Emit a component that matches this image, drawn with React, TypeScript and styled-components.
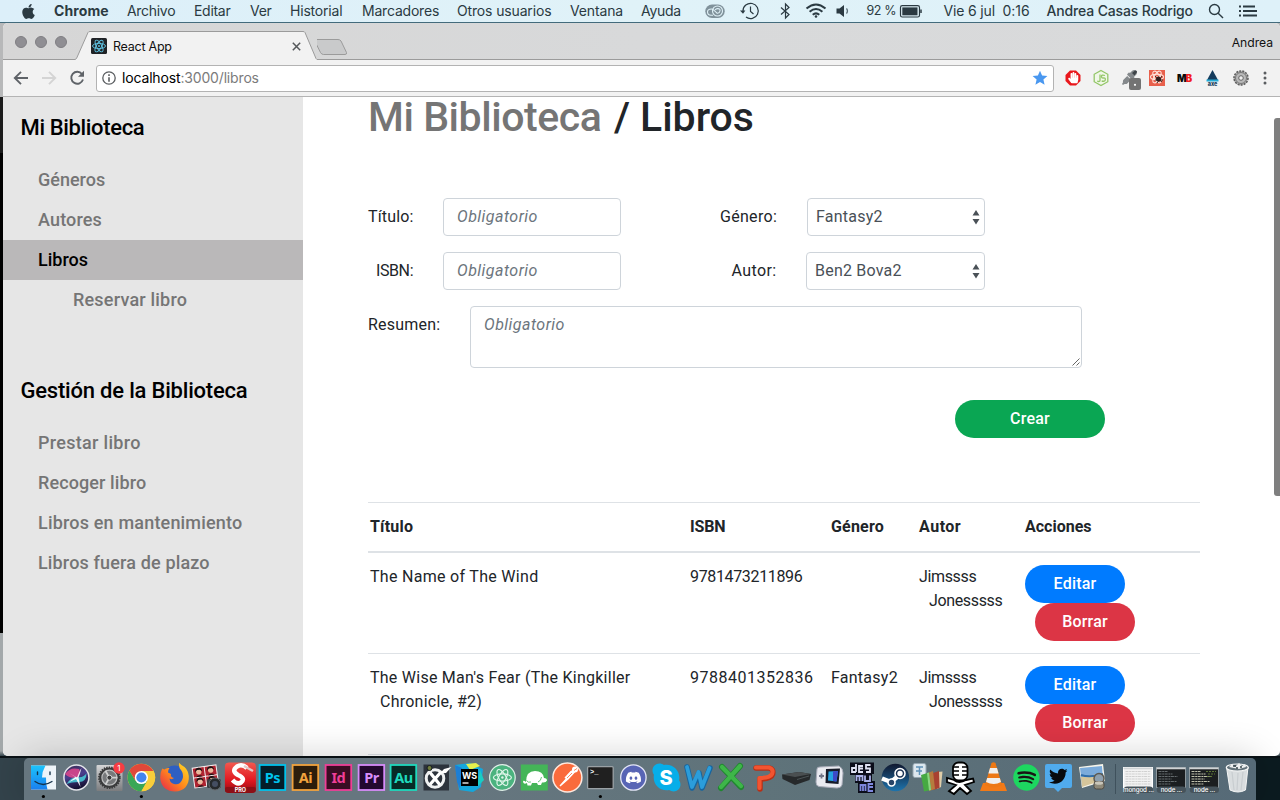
import React from "react";
import styled, { createGlobalStyle } from "styled-components";
import {
  FaApple,
  FaDiscord,
  FaSkype,
  FaSpotify,
  FaTwitter,
  FaHandPaper,
  FaEyeDropper,
} from "react-icons/fa";

const GlobalStyle = createGlobalStyle`
  * { box-sizing: border-box; }
  body { margin: 0; width: 1280px; height: 800px; overflow: hidden; background: #0d1a1f; }
  svg { display: block; flex: none; }
  svg text { white-space: pre; }
`;

const page = `Roboto, "Liberation Sans", sans-serif`;
const system = `Inter, "Liberation Sans", sans-serif`;

/* ---------- desktop ---------- */

const Desktop = styled.div`
  width: 1280px;
  height: 800px;
  display: flex;
  flex-direction: column;
  overflow: hidden;
`;

const MenuBar = styled.header`
  height: 23px;
  flex: none;
  display: flex;
  align-items: center;
  background: linear-gradient(90deg, #dceff9, #e0f2f8 50%, #def1f9);
  border-bottom: 1px solid #436b7c;
  font-family: ${system};
  color: #2b3a42;
`;

const MenuItem = styled.span<{ $w: number; $gap?: number; $weight?: number; $track?: number; $size?: number }>`
  flex: none;
  width: ${(p) => p.$w}px;
  margin-left: ${(p) => p.$gap ?? 18}px;
  font-size: ${(p) => p.$size ?? 14}px;
  font-weight: ${(p) => p.$weight ?? 400};
  letter-spacing: ${(p) => p.$track ?? -0.3}px;
  line-height: 22px;
  white-space: pre;
`;

const Space = styled.span<{ $w: number }>`
  flex: none;
  width: ${(p) => p.$w}px;
`;

const Stage = styled.div`
  flex: 1;
  min-height: 0;
  display: flex;
  flex-direction: column;
  padding-left: 3px;
  background:
    linear-gradient(#0a1216, #0a1216) 0 733px / 100% 2px no-repeat,
    linear-gradient(90deg, #33434b 0 24px, #0c1b20 60px) 0 735px / 100% 42px no-repeat,
    linear-gradient(#b7b8b9 0 74px, #1b1b1b 74px 130px, #000 130px 610px, #a3a8aa 610px 728px, #33434b 733px);
`;

/* ---------- browser window ---------- */

const Window = styled.section`
  height: 733px;
  flex: none;
  display: flex;
  flex-direction: column;
  overflow: hidden;
  border-radius: 5px;
  background: #fff;
`;

const TabStrip = styled.div`
  height: 37px;
  flex: none;
  display: flex;
  background: linear-gradient(90deg, #d6d6d6, #d8d9da 50%, #d9dadb);
  border-bottom: 1px solid #9b9b9b;
  font-family: ${system};
`;

const Lights = styled.div`
  display: flex;
  gap: 8px;
  padding: 13px 0 0 12px;
  width: 72px;
`;

const Light = styled.i`
  width: 12px;
  height: 12px;
  border-radius: 50%;
  background: #8f8e93;
  border: 1px solid #7f7e82;
`;

const Tab = styled.div`
  position: relative;
  width: 242px;
  height: 37px;
  display: flex;
  align-items: center;
  padding: 9px 16px 0 16px;
  font-size: 12.5px;
  color: #111;
  & > * { position: relative; }
`;

const TabShape = styled.svg`
  && { position: absolute; left: 0; top: 0; }
`;

const TabTitle = styled.span`
  flex: 1;
  margin-left: 6px;
  letter-spacing: -0.25px;
  white-space: nowrap;
`;

const Profile = styled.span`
  margin-left: auto;
  padding: 0 7px 0 0;
  font-size: 12.2px;
  line-height: 39px;
  color: #111;
  letter-spacing: -0.05px;
`;

const Toolbar = styled.div`
  height: 37px;
  flex: none;
  display: flex;
  align-items: center;
  background: #f2f2f2;
  border-bottom: 1px solid #b4b4b4;
  font-family: ${system};
`;

const Address = styled.div`
  width: 958px;
  height: 27px;
  flex: none;
  display: flex;
  align-items: center;
  padding: 0 5px;
  background: #fff;
  border: 1px solid #b3b3b3;
  border-radius: 3px;
`;

const Url = styled.span`
  flex: 1;
  margin-left: 6px;
  padding-bottom: 1px;
  font-size: 14px;
  letter-spacing: -0.16px;
  color: #000;
  span { color: #7b7b7b; }
`;

const Viewport = styled.div`
  flex: 1;
  min-height: 0;
  display: flex;
  position: relative;
  font-family: ${page};
`;

const ScrollThumb = styled.div`
  position: absolute;
  right: 0;
  top: 21px;
  width: 6px;
  height: 378px;
  border-radius: 3px 0 0 3px;
  background: #7f7f7f;
`;

/* ---------- side navigation ---------- */

const Sidebar = styled.aside`
  width: 300px;
  flex: none;
  background: #e6e6e6;
`;

const SideTitle = styled.h2<{ $track: number }>`
  height: 63px;
  margin: 0;
  padding-left: 17.5px;
  font-size: 22px;
  font-weight: 500;
  line-height: 62px;
  letter-spacing: ${(p) => p.$track}px;
  color: #000;
`;

const SideList = styled.nav`
  margin-bottom: 40px;
`;

const SideLink = styled.a<{ $active?: boolean; $sub?: boolean; $track?: number }>`
  display: block;
  height: 40px;
  padding-left: ${(p) => (p.$sub ? 70 : 35)}px;
  font-size: 18px;
  font-weight: 500;
  line-height: 40px;
  letter-spacing: ${(p) => p.$track ?? 0}px;
  color: ${(p) => (p.$active ? "#000" : "#757575")};
  background: ${(p) => (p.$active ? "#bab8b9" : "transparent")};
`;

/* ---------- main content ---------- */

const Main = styled.main`
  flex: 1;
  padding-left: 65px;
  color: #212529;
  font-size: 16px;
`;

const Title = styled.h1`
  display: flex;
  height: 48px;
  margin: -4px 0 57px;
  font-size: 41px;
  font-weight: 500;
  line-height: 48px;
  white-space: pre;
`;

const TitlePart = styled.span<{ $w: number; $muted?: boolean; $track?: number }>`
  width: ${(p) => p.$w}px;
  letter-spacing: ${(p) => p.$track ?? 0}px;
  color: ${(p) => (p.$muted ? "#757575" : "#212529")};
`;

const FormRow = styled.div`
  display: flex;
  margin-bottom: 16px;
`;

const Label = styled.label<{ $w: number; $indent?: number; $track?: number }>`
  width: ${(p) => p.$w}px;
  padding-left: ${(p) => p.$indent ?? 0}px;
  line-height: 37px;
  letter-spacing: ${(p) => p.$track ?? 0}px;
  white-space: nowrap;
`;

const Field = styled.div<{ $w: number; $h?: number; $select?: boolean }>`
  position: relative;
  width: ${(p) => p.$w}px;
  height: ${(p) => p.$h ?? 38}px;
  display: flex;
  justify-content: space-between;
  padding: ${(p) => (p.$select ? "0 4px 0 8px" : "0 12px 0 13px")};
  border: 1px solid #ced4da;
  border-radius: 4px;
  line-height: 35px;
  color: #495057;
`;

const Placeholder = styled.em`
  color: #6c757d;
  letter-spacing: 0.47px;
`;

const Value = styled.span`
  letter-spacing: 0.22px;
`;

const Grip = styled.svg`
  position: absolute;
  right: 1px;
  bottom: 1px;
`;

const SubmitRow = styled.div`
  padding: 16px 0 0 587px;
`;

const Pill = styled.button<{ $color: string; $w?: number; $shift?: number }>`
  display: block;
  width: ${(p) => p.$w ?? 100}px;
  height: 38px;
  margin: 0 0 0 ${(p) => p.$shift ?? 0}px;
  padding: 0 0 1px;
  border: 0;
  border-radius: 19px;
  background: ${(p) => p.$color};
  color: #fff;
  font-family: ${page};
  font-size: 16px;
  font-weight: 500;
  letter-spacing: 0.2px;
`;

const Table = styled.div`
  width: 832px;
  margin-top: 64px;
  border-top: 1px solid #dee2e6;
`;

const Row = styled.div<{ $head?: boolean }>`
  display: grid;
  grid-template-columns: 320px 141px 88px 106px 1fr;
  height: ${(p) => (p.$head ? 50 : 101)}px;
  padding: ${(p) => (p.$head ? "12px 0 0 2px" : "12px 0 0 2px")};
  border-bottom: ${(p) => (p.$head ? 2 : 1)}px solid #dee2e6;
  font-weight: ${(p) => (p.$head ? 700 : 400)};
  line-height: 24px;
`;

const Cell = styled.span<{ $track?: number }>`
  padding-left: 10px;
  text-indent: -10px;
  letter-spacing: ${(p) => p.$track ?? 0}px;
  white-space: pre-line;
`;

/* ---------- dock ---------- */

const Dock = styled.footer`
  position: relative;
  width: 1232px;
  height: 42px;
  margin: 2px 0 0 21px;
  flex: none;
  display: flex;
  padding: 2px 0 0 3.2px;
  border-radius: 5px 5px 0 0;
  background: linear-gradient(90deg, #66767f, #66767f 35%, #5f737a 60%, #566a77);
  box-shadow: 0 0 38px rgba(0, 0, 0, 0.2);
`;

const DockIcon = styled.svg`
  width: 32.75px;
  height: 40px;
  overflow: visible;
`;

const DockDivider = styled.i`
  width: 1px;
  height: 30px;
  margin: 4px 6px 0 7.5px;
  background: #3f515c;
`;

const DockItem = ({ running, children }: { running?: boolean; children: React.ReactNode }) => (
  <DockIcon viewBox="0 0 32.75 40">
    {children}
    {running && <circle cx="16.4" cy="36.5" r="1.6" fill="#000" />}
  </DockIcon>
);

const Adobe = ({ label, fg, bg }: { label: string; fg: string; bg: string }) => (
  <DockItem>
    <rect x="3.6" y="5" width="25.6" height="25" fill={bg} stroke={fg} strokeWidth="1.8" />
    <text x="16.4" y="23" textAnchor="middle" fontFamily="Noto Sans, sans-serif" fontWeight="700" fontSize="14.5" letterSpacing="-.5" fill={fg}>
      {label}
    </text>
  </DockItem>
);

const Minimized = ({ label, light, colored }: { label: string; light?: boolean; colored?: boolean }) => (
  <DockItem>
    <rect x="1.5" y="7.5" width="29" height="20" fill={light ? "#f2f2f2" : "#1b1e20"} stroke={light ? "#fff" : "#8d979c"} />
    <rect x="1.5" y="7.5" width="29" height="1.8" fill="#cfd3d5" />
    {[11.5, 14, 16.5, 19, 21.5, 24].map((y, i) => (
      <path
        key={y}
        d={`M3.5 ${y}h${light ? 25 : 9 + ((i * 5) % 11)}`}
        stroke={light ? "#cccccc" : colored ? "#d5d5bd" : "#6d7476"}
        strokeWidth=".9"
        strokeDasharray="3 .7 2 .5"
      />
    ))}
    {colored && <path d="M18 11.5h10M20 14h7M19 16.5h6" stroke="#6e8a3d" strokeWidth=".8" strokeDasharray="2 1" />}
    <rect x="1.8" y="26.4" width="29.200" height="6.6" rx="3.3" fill="#46535b" />
    <text x="16.4" y="31.500" textAnchor="middle" fontFamily={system} fontWeight="500" fontSize="6.200" letterSpacing="-.1" fill="#fff">
      {label}
    </text>
  </DockItem>
);

const AtomRings = ({ cx, cy, rx, ry, color, width }: { cx: number; cy: number; rx: number; ry: number; color: string; width: number }) => (
  <g fill="none" stroke={color} strokeWidth={width}>
    {[0, 60, 120].map((a) => (
      <ellipse key={a} cx={cx} cy={cy} rx={rx} ry={ry} transform={`rotate(${a} ${cx} ${cy})`} />
    ))}
    <circle cx={cx} cy={cy} r={width} fill={color} stroke="none" />
  </g>
);

const DockBar = () => (
  <Dock>
    <svg width="0" height="0">
      <defs>
        <linearGradient id="finderBlue" x2="0" y2="1"><stop stopColor="#1cc3fb" /><stop offset="1" stopColor="#1a80f0" /></linearGradient>
        <linearGradient id="sred" x2="0" y2="1"><stop stopColor="#f2594f" /><stop offset=".6" stopColor="#df1720" /><stop offset="1" stopColor="#8e0b12" /></linearGradient>
        <linearGradient id="siri" x2=".3" y2="1"><stop stopColor="#3b2a4f" /><stop offset=".5" stopColor="#4a3f8f" /><stop offset="1" stopColor="#141033" /></linearGradient>
        <linearGradient id="fox" x1="1" x2="0" y2="1"><stop stopColor="#ffe226" /><stop offset=".5" stopColor="#ff8a1c" /><stop offset="1" stopColor="#e5204f" /></linearGradient>
        <linearGradient id="steam" x2="0" y2="1"><stop stopColor="#10182f" /><stop offset="1" stopColor="#1e74ad" /></linearGradient>
        <linearGradient id="metal" x2="0" y2="1"><stop stopColor="#d5d6d7" /><stop offset="1" stopColor="#7b7c7e" /></linearGradient>
      </defs>
    </svg>
    <DockItem running>
      <rect x="4" y="5.5" width="25" height="24" fill="#eef4f9" />
      <path d="M4 5.5h14.5q-3.5 6-3.500 12h4q-.3 6 1.500 12H4z" fill="url(#finderBlue)" />
      <path d="M8 21.500q8 6 17 0" fill="none" stroke="#15324b" strokeWidth="1.300" strokeLinecap="round" />
      <path d="M10.500 12v2.500M23 12v2.500" stroke="#15324b" strokeWidth="1.400" strokeLinecap="round" />
    </DockItem>
    <DockItem>
      <circle cx="16.400" cy="17.500" r="12.500" fill="url(#siri)" stroke="#e3e4ea" strokeWidth="1.500" />
      <path d="M5 14Q10 6.500 19 9Q22 13 17 18Q9 18.500 5 14" fill="#e0478c" opacity=".85" />
      <path d="M6.500 24Q11 17 17 17Q24 18 26.500 13Q26.500 22 19 22Q11 22 6.500 24" fill="#49d0dc" opacity=".85" />
      <path d="M17 17.500Q20 10 21.500 8Q20 14 18.500 17.500L20.500 27L16 19L9 22L15.500 17L9 13Z" fill="#fff" opacity=".9" />
    </DockItem>
    <DockItem>
      <rect x="3.500" y="5" width="26" height="26" rx="1" fill="url(#metal)" />
      <circle cx="16.400" cy="17.700" r="10.300" fill="#3a3b3c" stroke="#3a3b3c" strokeWidth="2" strokeDasharray="1.500 1" />
      <circle cx="16.400" cy="17.700" r="7.500" fill="#77797b" stroke="#bcbdbe" strokeWidth="1.200" />
      <path d="M16.400 17.700h8M16.400 17.700l-4-7M16.400 17.700l-4 7" stroke="#d0d1d1" strokeWidth="1.800" />
      <circle cx="16.400" cy="17.700" r="2.500" fill="#3a3b3c" stroke="#d0d1d1" />
      <circle cx="26" cy="8" r="5.700" fill="#f63d43" />
      <text x="26" y="11" textAnchor="middle" fontFamily={system} fontSize="8" fill="#fff">1</text>
    </DockItem>
    <DockItem running>
      <circle cx="16.400" cy="17.500" r="13.800" fill="#f9ce3b" />
      <path d="M4.450 10.600A13.800 13.800 0 0 0 16.400 31.300L22.300 20.800L16.400 17.500L10.500 20.800z" fill="#3aa757" />
      <path d="M28.350 10.600H16.400v7l6 3.300L16.400 31.300A13.800 13.800 0 0 0 28.350 10.600" fill="#f9ce3b" />
      <path d="M4.450 10.600A13.800 13.800 0 0 1 28.350 10.900H16.400L10.500 20.800Z" fill="#e0483a" />
      <circle cx="16.400" cy="17.500" r="6.600" fill="#fff" />
      <circle cx="16.400" cy="17.500" r="5.100" fill="#4285f0" />
    </DockItem>
    <DockItem>
      <circle cx="16.600" cy="17" r="11.500" fill="#2e5fc2" />
      <path d="M4.200 8.500Q2 13 2.200 18C3 27 9 31.500 17 31.500C26 31.500 31.500 25 30.800 16Q30 10 26.500 7Q23 5 21 2.700Q20.500 7.500 23 10Q26 14 24.500 19Q22 25.500 16 24Q12 23 11.500 18.500Q14 20 16 18Q12 17 13 14L10 12.500Q10 9.500 11.500 8Q8 7.500 6.500 9.500Z" fill="url(#fox)" />
    </DockItem>
    <DockItem>
      <g transform="rotate(-8 14 17)">
        <rect x="2" y="6" width="25" height="21" fill="#f2eeee" />
        {[[3, 7], [15, 7], [3, 17], [15, 17]].map(([x, y]) => (
          <g key={`${x}-${y}`}>
            <rect x={x} y={y} width="11" height="9" fill="#ae2330" />
            <circle cx={x + 5.5} cy={y + 4} r="2.700" fill="#e9b99d" />
            <path d={`M${x + 2} ${y + 4}q0-4 3.500-4t3.500 4l-2-2h-3zM${x + 2} ${y + 9}q3.500-3 7 0`} fill="#1b1314" />
          </g>
        ))}
      </g>
      <rect x="16" y="19" width="14" height="9" rx="1.500" fill="#3b3f43" />
      <circle cx="24" cy="24" r="6" fill="#26292c" stroke="#666a6e" />
      <circle cx="24" cy="24" r="3" fill="#454e62" />
    </DockItem>
    <DockItem>
      <rect x="0.900" y="2.500" width="31" height="30.500" rx="4" fill="url(#sred)" />
      <path d="M23 8Q18 3.500 13 6.500Q7 11 14 15Q22 18.500 17 22.500Q13 25 8.500 20" fill="none" stroke="#fff" strokeWidth="4.500" />
      <path d="M20 6l9 5" stroke="#e5c7c7" strokeWidth="2.500" />
      <rect x="1" y="27" width="30.800" height="5.500" rx="2" fill="#8c0f16" />
      <text x="16.400" y="31.800" textAnchor="middle" fontFamily={system} fontWeight="700" fontSize="5.500" fill="#fff">PRO</text>
    </DockItem>
    <Adobe label="Ps" fg="#00c3ec" bg="#041d28" />
    <Adobe label="Ai" fg="#f2a33d" bg="#2d1d0b" />
    <Adobe label="Id" fg="#ef3f97" bg="#3a0d23" />
    <Adobe label="Pr" fg="#d78cfa" bg="#23082f" />
    <Adobe label="Au" fg="#1fd9bd" bg="#072a26" />
    <DockItem>
      <rect x="3.500" y="4.500" width="25.500" height="26" fill="#2c333c" />
      <circle cx="15" cy="18.500" r="8.800" fill="none" stroke="#eef0f1" strokeWidth="3" />
      <path d="M10 24L24 9L31.500 7L26 13L20 13.500Z" fill="#fff" />
      <path d="M10 24.500L21 12M10 12.500L20 25" stroke="#fff" strokeWidth="3.200" />
      <circle cx="9.500" cy="8" r="2.500" fill="#6e7b3b" stroke="#151c21" />
    </DockItem>
    <DockItem>
      <path d="M2 5L17 3L30 9L28 27L20 32L6 30Z" fill="#14a7dc" />
      <path d="M2 5L9 8L7 29L4 22Z" fill="#1c7ed5" />
      <path d="M13 4L23 3L27 6L17 10Z" fill="#e5f04d" />
      <path d="M27 10L31 20L24 27Z" fill="#19cdc4" />
      <rect x="8" y="9" width="17" height="17" fill="#000" />
      <text x="9" y="18.800" fontFamily={system} fontWeight="700" fontSize="9" fill="#fff">WS</text>
      <path d="M9.500 23h6" stroke="#fff" strokeWidth="1.300" />
    </DockItem>
    <DockItem>
      <circle cx="16.400" cy="17.500" r="12.800" fill="#4bb37f" stroke="#e0f0e8" strokeWidth="1.200" />
      <AtomRings cx={16.4} cy={17.5} rx={9} ry={3.6} color="#dff6ea" width={1.2} />
    </DockItem>
    <DockItem>
      <rect x="2.800" y="4.500" width="27" height="26" fill="#44b558" />
      <path d="M8 22Q8 11 17 11Q25 11 26 18Q29 18 29 20.500Q28 23 24 22.500L23 25H20L19 23H14L13 25.500H9.500L9 23Q5 25 5 21Q6 20 8 22" fill="#fff" />
      <path d="M8.500 20.500Q10 23 13 22M20 22Q23 21 23.500 17" stroke="#44b558" strokeWidth=".8" fill="none" />
    </DockItem>
    <DockItem>
      <circle cx="16.400" cy="17.500" r="14.500" fill="#fa6b3c" stroke="#ffe9df" strokeWidth="1.500" />
      <path d="M9 26L17 17L14 18L20 11.500Q22 10 23.500 12L17 19Z" fill="#fff" stroke="#fff" strokeWidth="1.300" />
      <circle cx="24" cy="9.500" r="3" fill="#fff" />
      <path d="M23 10.500l3-2M16 18l5-5" stroke="#fa6b3c" strokeWidth=".8" />
    </DockItem>
    <DockItem running>
      <rect x="3.600" y="6.700" width="25.600" height="22" rx="1" fill="#202020" stroke="#9aa1a5" strokeWidth="1.300" />
      <text x="6" y="14" fontFamily="Liberation Mono, monospace" fontWeight="700" fontSize="7" fill="#fff">&gt;_</text>
    </DockItem>
    <DockItem>
      <circle cx="16.400" cy="17.500" r="12.700" fill="#5865b5" stroke="#e4e6f5" strokeWidth="1.300" />
      <FaDiscord x="8.200" y="9.300" size={16.5} color="#fff" />
    </DockItem>
    <DockItem>
      <FaSkype x="1.500" y="1.500" size={32} color="#07aee9" />
      <circle cx="16.900" cy="17.500" r="9.600" fill="#07aee9" />
      <text x="17" y="24.600" textAnchor="middle" fontFamily={system} fontWeight="800" fontSize="20" fill="#fff">S</text>
    </DockItem>
    <DockItem>
      <path d="M5 7L10 28L17 13L20 28L28 8" fill="none" stroke="#17659f" strokeWidth="5.500" strokeLinejoin="round" strokeLinecap="round" />
      <path d="M5 7L10 27L16.500 12L20 27L27.500 8" fill="none" stroke="#2b9ddb" strokeWidth="3.800" strokeLinejoin="round" strokeLinecap="round" />
    </DockItem>
    <DockItem>
      <path d="M7 7L26 27M25 6L6 28" stroke="#20872f" strokeWidth="6" strokeLinecap="round" />
      <path d="M7 7L26 26M25 6L6 27" stroke="#3eb649" strokeWidth="4.200" strokeLinecap="round" />
    </DockItem>
    <DockItem>
      <path d="M8 8H21Q26 9 24.500 14.500Q23 19 12 19V29" fill="none" stroke="#b92f15" strokeWidth="5.500" strokeLinejoin="round" strokeLinecap="round" />
      <path d="M8 7.500H21Q26 9 24 14Q22 18 11.500 18V28" fill="none" stroke="#f25430" strokeWidth="4.200" strokeLinejoin="round" strokeLinecap="round" />
    </DockItem>
    <DockItem>
      <path d="M2 14.500L19 12L31 14L29.500 20L15 25L2.500 19Z" fill="#26292b" />
      <path d="M2 14.500L19 12L31 14L15 17Z" fill="#4a4f51" />
      <path d="M17 19.500L29 16" stroke="#565e61" strokeWidth=".8" />
    </DockItem>
    <DockItem>
      <path d="M4 9Q4 7 7 7L26 6Q30 8 30 13L29 25Q28 28 24 28L6 26.500Q3 26 3 22Z" fill="#e9eaf0" stroke="#a9acb9" />
      <path d="M13 9L27 8.500L25.500 24L12.500 23Z" fill="#171a28" />
      <path d="M15.500 11.500L25 11L23.500 21.500L15 20.500Z" fill="#25a2e2" />
      <path d="M20 11.300L25 11L23.500 21.500L20 21Z" fill="#3d49c9" />
      <path d="M6 16h5M8.500 13.500v5" stroke="#717588" strokeWidth="1.800" />
    </DockItem>
    <DockItem>
      <path d="M4 2.500H28V14H26V21H29V33H12V23H9V15H4Z" fill="#0b0d1a" />
      <g fill="none" strokeWidth="1.800">
        <path d="M10 4v8M10 8H6v4h4M17 8.500h-4V6h4M13 8.500V12h4M24.500 5H20v3.500h4V12h-4" stroke="#dfe2f3" />
        <path d="M10.500 21v-5h6v5M13.500 16v5M19 15.500V21h5v-5.500" stroke="#a8afe7" />
        <path d="M14.500 31v-6h5v6M17 25v6M27 27h-4.500v-3H27M22.500 27v4H27" stroke="#7f88df" />
      </g>
    </DockItem>
    <DockItem>
      <circle cx="16.400" cy="17.500" r="13.700" fill="url(#steam)" />
      <path d="M3 18.500L12 22L18 17" stroke="#fff" strokeWidth="4.500" fill="none" />
      <circle cx="21" cy="13.500" r="5" fill="#1b3354" stroke="#fff" strokeWidth="1.600" />
      <circle cx="21" cy="13.500" r="2.700" fill="#fff" />
      <circle cx="12.500" cy="22.500" r="3.500" fill="#284568" stroke="#fff" strokeWidth="1.600" />
    </DockItem>
    <DockItem>
      <rect x="2" y="3.500" width="13" height="14" rx="2" fill="#dce7ee" stroke="#95a6b0" />
      <path d="M5 7h7M8.500 7v8M5 11h6" stroke="#5e91b7" strokeWidth="1.500" />
      <path d="M27 12L31.500 11.500L30 27L26 29Z" fill="#dfcda9" />
      <path d="M22 13L28 11L28.500 28L22 30Z" fill="#a94131" />
      <path d="M17 13L22 11L24 29L18 31Z" fill="#b67b3e" />
      <path d="M10 15L18 12.500L20 30L13 31.500Z" fill="#46a942" />
      <path d="M16 13L18 12.500L20 30L18 30.500Z" fill="#8bd681" />
    </DockItem>
    <DockItem>
      <g fill="#fff" stroke="#000" strokeWidth="1.800">
        <path d="M10 20Q15 24 22 20L29 18.500L30 22L21 25L27 31L23 34L16 28L10 34L5 31L12 25L3 22V18Z" />
        <rect x="9" y="2.500" width="14.500" height="18" rx="5.500" />
      </g>
      <path d="M9 7h6M18 7h5M9 11h6M18 11h5M9 15h6M18 15h5" stroke="#000" strokeWidth="1.500" />
    </DockItem>
    <DockItem>
      <path d="M6 23H27L30 31H3Z" fill="#f27a17" />
      <path d="M14.500 3Q16.500 1.500 18.500 3L25 25Q17 30 8 25Z" fill="#ed7814" />
      <path d="M13 8h7l1.600 5.500h-10.200zM10.200 18h12.600l1.200 4Q17 26 9 22z" fill="#f0efed" />
    </DockItem>
    <DockItem>
      <circle cx="16.400" cy="17.500" r="11" fill="#191414" />
      <FaSpotify x="2.800" y="3.900" size={27.2} color="#1dd760" />
    </DockItem>
    <DockItem>
      <path d="M5 4H28Q30 4 30 6V26Q30 28 28 28H20L16 32L12 28H5Q3 28 3 26V6Q3 4 5 4" fill="#50abed" />
      <FaTwitter x="7" y="7" size={18.5} color="#080b0e" />
    </DockItem>
    <DockItem>
      <path d="M4 7L28 4L30 21L7 28Z" fill="#f7f5ec" />
      <path d="M5 8L27 6L28 19L7 26Z" fill="#7babdb" />
      <path d="M6 17L28 13L28 20L7 27Z" fill="#d5c59b" />
      <path d="M6 15q9 3 22-1" stroke="#2f6dab" strokeWidth="2" fill="none" />
      <circle cx="24" cy="18.500" r="5" fill="#8d9fae" stroke="#5c5850" strokeWidth="1.400" />
      <rect x="19" y="21.500" width="10" height="7.500" rx="2.500" fill="#8f8a7a" stroke="#514d45" />
      <ellipse cx="24" cy="23" rx="4.200" ry="1.800" fill="#c9c6ba" />
    </DockItem>
    <DockDivider />
    <Minimized label="mongod ..." light />
    <Minimized label="node ..." />
    <Minimized label="node ..." colored />
    <DockItem>
      <path d="M5.500 7H27L24.500 30Q17 34 9 30Z" fill="#d9dddf" stroke="#f5f6f6" />
      <ellipse cx="16.300" cy="7.500" rx="11" ry="3.500" fill="#63727a" stroke="#f6f7f7" strokeWidth="1.200" />
      <path d="M8 7l3-3 3 3 4-4 3 3 3-2 1 3-7 2z" fill="#eef0f1" />
      <path d="M12 6h3M19 7h2M15 8h2" stroke="#37464c" strokeWidth="1.500" />
      <path d="M11 12l2 18M17 13l-1 17M22 12l-2 18" stroke="#c8cdd0" strokeWidth="1.200" />
    </DockItem>
  </Dock>
);

/* ---------- menu bar ---------- */

const MacMenuBar = () => (
  <MenuBar>
    <Space $w={19.5} />
    <FaApple size={17} />
    <MenuItem $w={55} $gap={17.5} $weight={700} $track={0.1}>Chrome</MenuItem>
    <MenuItem $w={49}>Archivo</MenuItem>
    <MenuItem $w={38}>Editar</MenuItem>
    <MenuItem $w={22}>Ver</MenuItem>
    <MenuItem $w={54} $track={-0.2}>Historial</MenuItem>
    <MenuItem $w={77} $track={-0.2}>Marcadores</MenuItem>
    <MenuItem $w={95} $track={-0.15}>Otros usuarios</MenuItem>
    <MenuItem $w={53} $track={-0.15}>Ventana</MenuItem>
    <MenuItem $w={40}>Ayuda</MenuItem>
    <Space $w={24} />
    <svg width="20" height="15" viewBox="0 0 20 15">
      <rect x=".3" y=".5" width="19.400" height="13.500" rx="6.700" fill="#80929b" />
      <g fill="none" stroke="#e0f2f8" strokeWidth="1.100">
        <circle cx="12.500" cy="7" r="5" />
        <path d="M8 11.200H6Q2.500 11 2.500 8T6.500 5Q8 5 12 9.200Q14.500 9.500 15 7T12.500 4.600Q11 4.700 10 6" />
      </g>
    </svg>
    <Space $w={15} />
    <svg width="21" height="18" viewBox="0 0 21 18" fill="none" stroke="#2b3a42" strokeWidth="1.200">
      <path d="M3 9A7.600 7.600 0 1 1 6 15" />
      <path d="M0 8.500h5.400L3 11.800z" fill="#2b3a42" stroke="none" />
      <path d="M10.500 4.500v5l3 2.500" />
    </svg>
    <Space $w={17} />
    <svg width="15" height="18" viewBox="0 0 15 18" fill="none" stroke="#2b3a42" strokeWidth="1.200">
      <path d="M3 5.500L11 12.500L7.500 16V2L11 5.500L3 12.500" />
    </svg>
    <Space $w={11.5} />
    <svg width="22" height="16" viewBox="0 0 22 16" fill="none" stroke="#2b3a42" strokeWidth="2">
      <path d="M1.500 5.500Q11-2.500 20.500 5.500M4.600 8.700Q11 3.200 17.400 8.700M7.700 11.700Q11 9 14.300 11.700" />
      <circle cx="11" cy="13.500" r="1.300" fill="#2b3a42" stroke="none" />
    </svg>
    <Space $w={9} />
    <svg width="14" height="14" viewBox="0 0 14 14">
      <path d="M.5 4.500h3L8 1v12L3.500 9.500h-3z" fill="#2b3a42" />
      <path d="M10.500 4.300q2 2.700 0 5.400" fill="none" stroke="#5f7079" strokeWidth="1.200" />
    </svg>
    <MenuItem $w={31} $gap={17} $size={12.5} $track={-0.4}>92 %</MenuItem>
    <svg width="24" height="13" viewBox="0 0 24 13">
      <rect x="2.500" y=".7" width="19" height="11.300" rx="1.800" fill="none" stroke="#2b3a42" strokeWidth="1.200" />
      <rect x="4.300" y="2.400" width="15.200" height="7.900" fill="#2b3a42" />
      <path d="M23 4.500v3.600" stroke="#2b3a42" strokeWidth="1.500" />
    </svg>
    <MenuItem $w={53} $gap={22} $track={-0.15}>Vie 6 jul</MenuItem>
    <MenuItem $w={28} $gap={6} $track={-0.05}>0:16</MenuItem>
    <MenuItem $w={148} $gap={16} $weight={500} $track={-0.15}>Andrea Casas Rodrigo</MenuItem>
    <Space $w={13} />
    <svg width="16" height="16" viewBox="0 0 16 16" fill="none" stroke="#2b3a42" strokeWidth="1.400">
      <circle cx="6.500" cy="6.500" r="5" />
      <path d="M10.200 10.200L15 15" />
    </svg>
    <Space $w={14} />
    <svg width="20" height="14" viewBox="0 0 20 14" stroke="#2b3a42" strokeWidth="1.800">
      <path d="M1 2.500h2M5 2.500h12M1 7h2M5 7h14M1 11.500h2M5 11.500h14" />
    </svg>
  </MenuBar>
);

/* ---------- browser chrome ---------- */

const Tabs = () => (
  <TabStrip>
    <Lights>
      <Light />
      <Light />
      <Light />
    </Lights>
    <Tab>
      <TabShape width="242" height="37" viewBox="0 0 242 37">
        <path d="M0 36.500L1.500 35.500L13 9.500Q13.500 8.500 15 8.500H228Q229.500 8.500 230 9.500L241 35.500L242 36.500V37H0Z" fill="#f2f2f2" />
        <path d="M0 36.500L1.500 35.500L13 9.500Q13.500 8.500 15 8.500H228Q229.500 8.500 230 9.500L241 35.500L242 36.500" fill="none" stroke="#9b9b9b" />
      </TabShape>
      <svg width="16" height="16" viewBox="0 0 16 16">
        <rect width="16" height="16" rx="1.500" fill="#202326" />
        <AtomRings cx={8} cy={8} rx={6.5} ry={2.6} color="#61c8e8" width={0.9} />
      </svg>
      <TabTitle>React App</TabTitle>
      <svg width="9" height="9" viewBox="0 0 9 9" stroke="#55585b" strokeWidth="1.500">
        <path d="M.8.8L8.200 8.200M8.200.8L.8 8.200" />
      </svg>
    </Tab>
    <svg width="36" height="36" viewBox="0 0 36 36">
      <path d="M-.5 16.500H21Q23 16.500 24 18L29.500 29.500Q30 31.500 28 31.500H6.500Q4.500 31.500 3.500 29.500L-2 18.500Q-2.500 16.500-.5 16.500Z" fill="#c9cacb" stroke="#9b9b9b" />
    </svg>
    <Profile>Andrea</Profile>
  </TabStrip>
);

const Extensions = () => (
  <svg width="224" height="36" viewBox="1054 60 224 36">
    <path d="M1070 70.500h6l4.500 4.500v6l-4.500 4.500h-6l-4.500-4.500v-6z" fill="#e9181d" />
    <FaHandPaper x="1067.500" y="72" size={11.5} color="#fff" />
    <path d="M1101 70.500l6.800 3.800v7.400l-6.800 3.800-6.800-3.800v-7.400z" fill="#f0f7e8" stroke="#93c668" strokeWidth="1.300" />
    <path d="M1100 74.500v6q0 1.500-2.800.7M1105 75.500q-3.500-1.200-3.500.8t2 1.700 1.800 1.800-3.600 1.200" fill="none" stroke="#93c668" strokeWidth="1.300" />
    <FaEyeDropper x="1122" y="70" size={15} color="#85898c" />
    <path d="M1132 73l3-2.500q2-.5 2 1.500l-2.500 3.500z" fill="#3d4347" />
    <rect x="1129" y="78" width="12" height="12" rx="2" fill="#737373" />
    <circle cx="1135" cy="84.800" r="1.100" fill="#fff" />
    <rect x="1149" y="70" width="16" height="16" fill="#e8604c" />
    <AtomRings cx={1157} cy={77} rx={6.5} ry={2.7} color="#ffe4dc" width={1.1} />
    <circle cx="1158.500" cy="79" r="2.500" fill="#30201e" />
    <path d="M1155 76l7 6M1162 76l-5 7M1155 80h8" stroke="#30201e" strokeWidth=".9" />
    <text x="1177" y="82" fontFamily={system} fontWeight="900" fontSize="10" letterSpacing="-.6" fill="#0a0a0a">M</text>
    <text x="1185.500" y="82" fontFamily={system} fontWeight="900" fontSize="10" fill="#f21c1c">B</text>
    <path d="M1212.500 70l5.500 10h-11z" fill="#143b5c" />
    <path d="M1206.500 80.500h12" stroke="#25acd7" strokeWidth="1.800" />
    <text x="1212.500" y="86" textAnchor="middle" fontFamily={system} fontWeight="800" fontSize="5.500" fill="#143b5c">axe</text>
    <circle cx="1241" cy="78" r="7" fill="#b5b5b5" stroke="#5e5e5e" strokeWidth="1.600" strokeDasharray="2 1.100" />
    <circle cx="1241" cy="78" r="5.500" fill="#b9b9b9" stroke="#777" />
    <circle cx="1241" cy="78" r="2.300" fill="#eee" stroke="#666" />
    <g fill="#5a5d60">
      <circle cx="1265" cy="73" r="1.500" />
      <circle cx="1265" cy="78" r="1.500" />
      <circle cx="1265" cy="83" r="1.500" />
    </g>
  </svg>
);

const BrowserToolbar = () => (
  <Toolbar>
    <svg width="93" height="36" viewBox="3 60 93 36" fill="none" strokeWidth="1.900">
      <path d="M28 78H15.500M21 71.800L14.800 78l6.200 6.200" stroke="#5f6368" />
      <path d="M42 78h12.500M49 71.800l6.200 6.200-6.200 6.200" stroke="#d4d4d4" />
      <path d="M82 74A6 6 0 1 0 83 79.500" stroke="#5f6368" />
      <path d="M84 70.800v6h-6z" fill="#5f6368" />
    </svg>
    <Address>
      <svg width="14" height="14" viewBox="0 0 14 14">
        <circle cx="7" cy="7" r="6.200" fill="none" stroke="#5a5d60" strokeWidth="1.300" />
        <path d="M7 6.200v4.500M7 3.200v1.700" stroke="#5a5d60" strokeWidth="1.600" />
      </svg>
      <Url>localhost<span>:3000/libros</span></Url>
      <svg width="16" height="16" viewBox="0 0 16 16">
        <path d="M8 .7l2.100 4.900 5.300.5-4 3.500 1.200 5.200L8 12.100l-4.600 2.700 1.200-5.200-4-3.500 5.300-.5z" fill="#4a98f0" />
      </svg>
    </Address>
    <Extensions />
  </Toolbar>
);

/* ---------- library page ---------- */

const SelectArrows = () => (
  <svg width="8" height="36" viewBox="0 0 8 36" fill="#4a5157">
    <path d="M4 11L7.500 16.500H.5zM4 25.500L.5 20H7.500z" />
  </svg>
);

const books = [
  { title: "The Name of The Wind", isbn: "9781473211896", genre: "", titleTrack: 0.3, isbnTrack: -0.35 },
  { title: "The Wise Man's Fear (The Kingkiller\nChronicle, #2)", isbn: "9788401352836", genre: "Fantasy2", titleTrack: 0.25, isbnTrack: 0.5 },
];

export default function App() {
  return (
    <Desktop>
      <GlobalStyle />
      <MacMenuBar />
      <Stage>
        <Window>
          <Tabs />
          <BrowserToolbar />
          <Viewport>
            <Sidebar>
              <SideTitle $track={-0.35}>Mi Biblioteca</SideTitle>
              <SideList>
                <SideLink>Géneros</SideLink>
                <SideLink $track={0.15}>Autores</SideLink>
                <SideLink $active>Libros</SideLink>
                <SideLink $sub $track={0.2}>Reservar libro</SideLink>
              </SideList>
              <SideTitle $track={-0.2}>Gestión de la Biblioteca</SideTitle>
              <SideList>
                <SideLink $track={0.3}>Prestar libro</SideLink>
                <SideLink $track={0.1}>Recoger libro</SideLink>
                <SideLink $track={0.18}>Libros en mantenimiento</SideLink>
                <SideLink $track={0.15}>Libros fuera de plazo</SideLink>
              </SideList>
            </Sidebar>
            <Main>
              <Title>
                <TitlePart $w={246} $muted $track={-0.45}>Mi Biblioteca</TitlePart>
                <TitlePart $w={26}>/</TitlePart>
                <TitlePart $w={120}>Libros</TitlePart>
              </Title>
              <FormRow>
                <Label $w={75} $track={0.15}>Título:</Label>
                <Field $w={178}><Placeholder>Obligatorio</Placeholder></Field>
                <Label $w={186} $indent={99} $track={0.3}>Género:</Label>
                <Field $w={178} $select><Value>Fantasy2</Value><SelectArrows /></Field>
              </FormRow>
              <FormRow>
                <Label $w={75} $indent={8} $track={-0.4}>ISBN:</Label>
                <Field $w={178}><Placeholder>Obligatorio</Placeholder></Field>
                <Label $w={185} $indent={110.5} $track={0.4}>Autor:</Label>
                <Field $w={179} $select><Value>Ben2 Bova2</Value><SelectArrows /></Field>
              </FormRow>
              <FormRow>
                <Label $w={102} $track={0.2}>Resumen:</Label>
                <Field $w={612} $h={62}>
                  <Placeholder>Obligatorio</Placeholder>
                  <Grip width="8" height="8" viewBox="0 0 8 8" stroke="#555" strokeWidth=".9">
                    <path d="M.5 7.500l7-7M4.500 7.500l3-3" />
                  </Grip>
                </Field>
              </FormRow>
              <SubmitRow>
                <Pill $color="#0aa653" $w={150}>Crear</Pill>
              </SubmitRow>
              <Table>
                <Row $head>
                  <Cell $track={0.2}>Título</Cell>
                  <Cell $track={-0.2}>ISBN</Cell>
                  <Cell $track={0.2}>Género</Cell>
                  <Cell $track={0.5}>Autor</Cell>
                  <Cell>Acciones</Cell>
                </Row>
                {books.map((b) => (
                  <Row key={b.isbn}>
                    <Cell $track={b.titleTrack}>{b.title}</Cell>
                    <Cell $track={b.isbnTrack}>{b.isbn}</Cell>
                    <Cell $track={0.25}>{b.genre}</Cell>
                    <Cell $track={-0.35}>{"Jimssss\nJonesssss"}</Cell>
                    <div>
                      <Pill $color="#007bff">Editar</Pill>
                      <Pill $color="#dc3545" $shift={10}>Borrar</Pill>
                    </div>
                  </Row>
                ))}
              </Table>
            </Main>
            <ScrollThumb />
          </Viewport>
        </Window>
        <DockBar />
      </Stage>
    </Desktop>
  );
}
